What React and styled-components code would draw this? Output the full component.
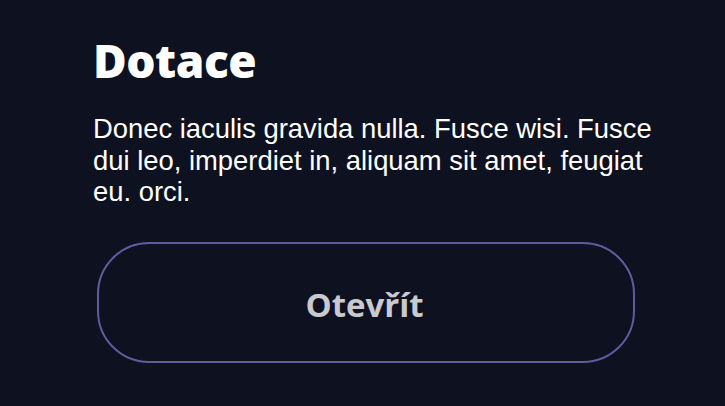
import React from "react";
import styled, { createGlobalStyle } from "styled-components";

const Global = createGlobalStyle`
  html, body { margin: 0; padding: 0; background: #0e1120; }
  body { width: 725px; height: 406px; overflow: hidden; }
`;

const Card = styled.section`
  box-sizing: border-box;
  width: 725px;
  height: 406px;
  padding: 30px 60px 0 93px;
  display: flex;
  flex-direction: column;
  align-items: flex-start;
  color: #ffffff;
`;

const Title = styled.h1`
  margin: 0;
  font-family: "Open Sans", "Noto Sans", sans-serif;
  font-weight: 800;
  font-size: 46px;
  line-height: 60px;
  letter-spacing: -0.5px;
`;

const Text = styled.p`
  margin: 23px 0 0;
  font-family: "Liberation Sans", Arial, sans-serif;
  font-size: 27.4px;
  line-height: 31.5px;
  color: #ffffff;
`;

const Button = styled.button`
  box-sizing: border-box;
  margin: 34px 0 0 4px;
  width: 538px;
  height: 121px;
  padding: 4px 3px 0 0;
  border: 2px solid #5f5b9e;
  border-radius: 52px;
  background: transparent;
  color: #c9c9cf;
  font-family: "Open Sans", "Noto Sans", sans-serif;
  font-weight: 700;
  font-size: 33px;
  cursor: pointer;
`;

export default function App() {
  return (
    <>
      <Global />
      <Card>
        <Title>Dotace</Title>
        <Text>
          Donec iaculis gravida nulla. Fusce wisi. Fusce dui leo, imperdiet in,
          aliquam sit amet, feugiat eu. orci.
        </Text>
        <Button>Otevřít</Button>
      </Card>
    </>
  );
}
